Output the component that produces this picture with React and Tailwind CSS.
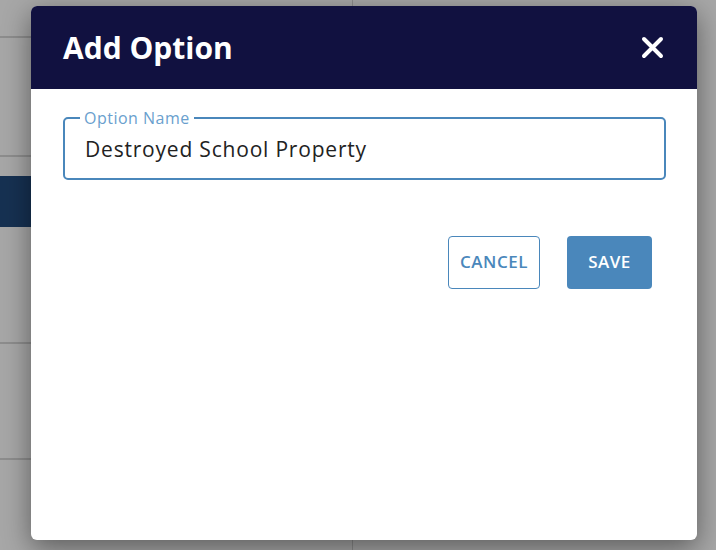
import React from "react";

export default function App() {
  return (
    <div className="relative w-[716px] h-[550px] overflow-hidden bg-[#a7a7a7]" style={{ fontFamily: '"Open Sans", "Noto Sans", sans-serif' }}>
      {/* background page (dimmed) */}
      <div className="absolute inset-0 flex">
        <div className="w-[353px] h-full flex flex-col border-r border-[#8c8c8c]">
          <div className="h-[38px] shrink-0 border-b-2 border-[#8d8d8d]" />
          <div className="h-[119px] shrink-0 border-b-2 border-[#8d8d8d]" />
          <div className="h-[19px] shrink-0" />
          <div className="h-[51px] shrink-0 bg-[#163152]" />
          <div className="h-[117px] shrink-0 border-b-2 border-[#8d8d8d]" />
          <div className="h-[116px] shrink-0 border-b-2 border-[#8d8d8d]" />
        </div>
        <div className="flex-1" />
      </div>

      {/* modal */}
      <div className="absolute left-[31px] top-[6px] w-[666px] h-[534px] bg-white rounded-[6px] overflow-hidden shadow-[0_8px_28px_rgba(0,0,0,0.45)] flex flex-col">
        <div className="h-[83px] shrink-0 bg-[#111140] flex items-center justify-between pl-[32px] pr-[33px]">
          <h2 className="text-white text-[30px] font-bold leading-none">Add Option</h2>
          <button className="w-[23px] h-[23px] flex items-center justify-center">
            <svg width="23" height="23" viewBox="0 0 23 23">
              <path d="M3 3 L20 20 M20 3 L3 20" stroke="white" strokeWidth="4" strokeLinecap="round" />
            </svg>
          </button>
        </div>
        <div className="pl-[32px] pr-[31px] pt-[28px]">
          <div className="relative h-[63px] border-2 border-[#4a87bb] rounded-[5px] pl-[20px] flex items-center">
            <span className="absolute left-[15px] -top-[11px] bg-white px-[4px] text-[16px] leading-[20px] tracking-[0.5px] text-[#6a9fce]">Option Name</span>
            <div className="mt-[1px] text-[21px] leading-none text-[#222] tracking-[0.8px]">Destroyed School Property</div>
          </div>
          <div className="flex justify-end gap-[27px] mt-[56px] pr-[14px]">
            <button className="w-[92px] h-[53px] pb-[2px] border border-[#4a87bb] rounded-[4px] text-[#4a87bb] text-[17px] font-semibold tracking-[0.5px]">CANCEL</button>
            <button className="w-[85px] h-[53px] pb-[2px] bg-[#4a87bb] rounded-[4px] text-white text-[17px] font-semibold tracking-[0.5px]">SAVE</button>
          </div>
        </div>
      </div>
    </div>
  );
}
